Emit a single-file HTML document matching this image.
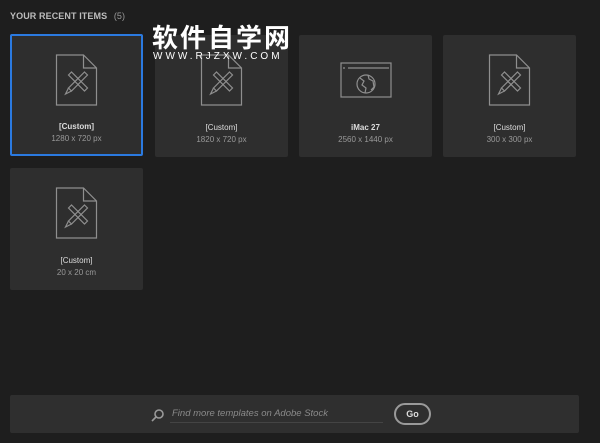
<!DOCTYPE html>
<html><head><meta charset="utf-8"><style>
body{margin:0;width:600px;height:443px;background:#1e1e1e;font-family:"Liberation Sans","Noto Sans CJK SC",sans-serif;position:relative;overflow:hidden}
.t{position:absolute;left:10px;top:11px;font-size:9px;font-weight:bold;color:#bdbdbd;letter-spacing:.1px}
.t span{font-weight:normal;color:#999;margin-left:4px}
.c{position:absolute;width:133px;height:122px;background:#2e2e2e;border-radius:2px;box-sizing:border-box}
.c.sel{border:2px solid #2b7ae0}
.c svg{position:absolute;left:50%;top:19px;transform:translateX(-50%)}
.n{position:absolute;left:0;right:0;top:88px;text-align:center;font-size:8px;color:#ddd;font-weight:bold}
.d{position:absolute;left:0;right:0;top:100px;text-align:center;font-size:8px;color:#999}
.wm{position:absolute;left:152px;top:23px;color:#fff;font-size:26px;font-weight:bold;letter-spacing:2px;font-family:"Noto Sans CJK SC",sans-serif;line-height:28px}
.wm2{position:absolute;left:153px;top:51px;color:#fff;font-size:10px;letter-spacing:3px}
.bar{position:absolute;left:10px;top:395px;width:569px;height:38px;background:#2f2f2f;border-radius:2px}
.s{position:absolute;left:162px;top:13px;font-size:9.5px;font-style:italic;color:#8a8a8a}
.ln{position:absolute;left:160px;top:27px;width:213px;height:1px;background:#444}
.go{position:absolute;left:384px;top:8px;width:37px;height:22px;border:2px solid #9a9a9a;border-radius:12px;box-sizing:border-box;color:#ddd;font-size:9px;font-weight:bold;text-align:center;line-height:18px}
</style></head><body>
<div class="t">YOUR RECENT ITEMS <span>(5)</span></div>
<svg width="0" height="0" style="position:absolute"><defs>
<g id="doc" fill="none" stroke="#8f8f8f" stroke-width="1.2"><path d="M1 1H28L41 14V51H1Z"/><path d="M28 1V14H41"/>
<path d="M13 21L16 18L32 34L29 37Z"/><path d="M29 18L32 21L16 37L13 34Z"/><path d="M13 34L10 40L16 37"/></g>
</defs></svg>
<div class="c sel" style="left:10px;top:34px"><svg width="43" height="52" style="top:18px"><use href="#doc"/></svg><div class="n" style="top:86px">[Custom]</div><div class="d" style="top:98px">1280 x 720 px</div></div>
<div class="c" style="left:155px;top:35px"><svg width="43" height="52"><use href="#doc"/></svg><div class="n" style="font-weight:normal">[Custom]</div><div class="d">1820 x 720 px</div></div>
<div class="c" style="left:299px;top:35px"><svg width="52" height="36" style="top:27px" fill="none" stroke="#8f8f8f" stroke-width="1.2"><rect x="1" y="1" width="50" height="34"/><path d="M8 6H49M3 6H5"/><circle cx="26" cy="22" r="9"/><path d="M20 16L24 19L22 23L26 26L25 31M28 13L29 17L33 19L34 25L31 28"/></svg><div class="n">iMac 27</div><div class="d">2560 x 1440 px</div></div>
<div class="c" style="left:443px;top:35px"><svg width="43" height="52"><use href="#doc"/></svg><div class="n" style="font-weight:normal">[Custom]</div><div class="d">300 x 300 px</div></div>
<div class="c" style="left:10px;top:168px"><svg width="43" height="52"><use href="#doc"/></svg><div class="n" style="font-weight:normal">[Custom]</div><div class="d">20 x 20 cm</div></div>
<div class="wm">软件自学网</div>
<div class="wm2">WWW.RJZXW.COM</div>
<div class="bar">
<svg style="position:absolute;left:141px;top:13px" width="14" height="14" fill="none" stroke="#9a9a9a" stroke-width="1.6"><circle cx="8" cy="6" r="4"/><path d="M5 9L1 13"/></svg>
<div class="s">Find more templates on Adobe Stock</div><div class="ln"></div>
<div class="go">Go</div>
</div>
</body></html>
